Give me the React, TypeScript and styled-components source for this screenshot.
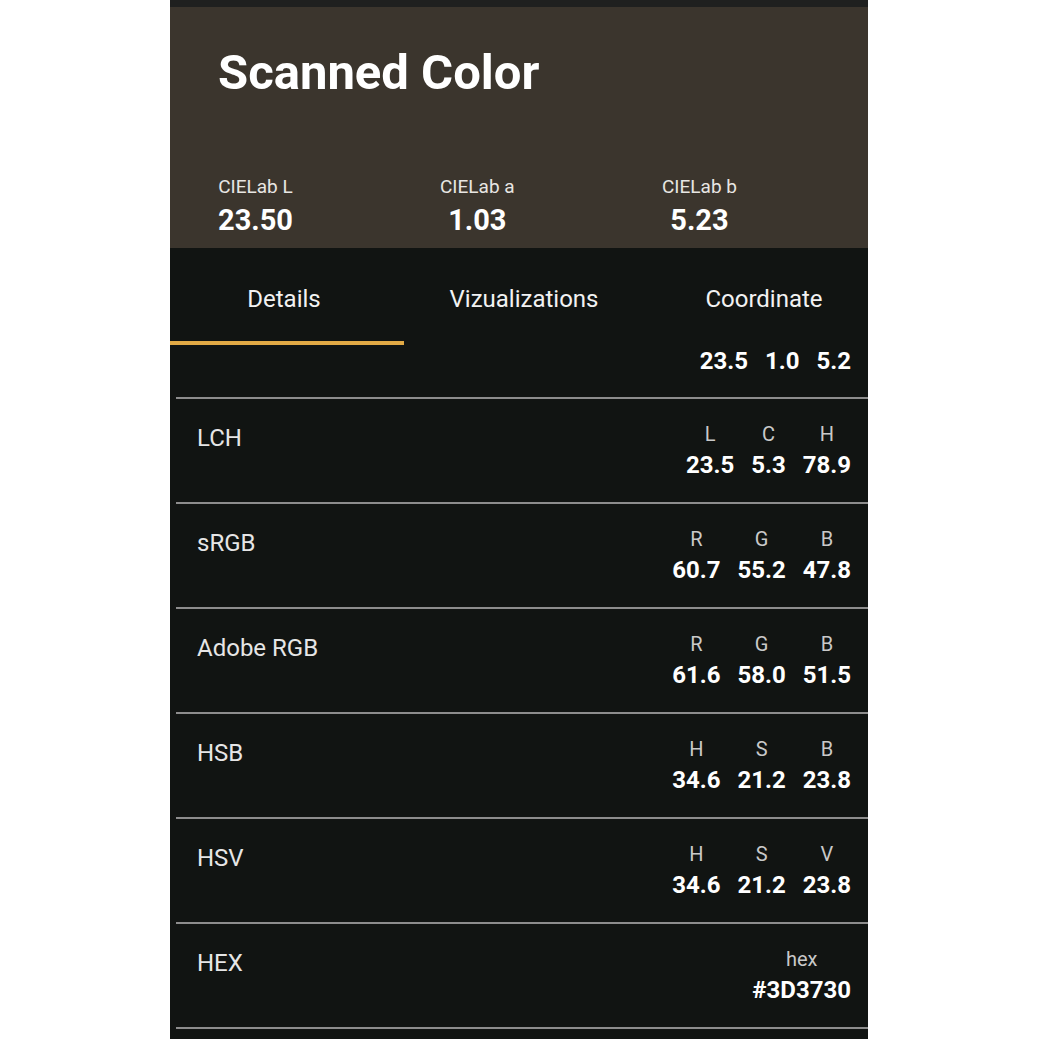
import React, { useState } from 'react';
import styled, { createGlobalStyle } from 'styled-components';

const GlobalStyle = createGlobalStyle`
  html, body {
    margin: 0;
    padding: 0;
    background: #ffffff;
  }
  body {
    font-family: Roboto, "Noto Sans", "Liberation Sans", sans-serif;
  }
`;

type Channel = { name: string; value: string };
type ColorSpace = { label: string; channels: Channel[]; scrolledPast?: boolean };

// the first row (CIELab) is scrolled up under the tab bar, only its values peek out
const spaces: ColorSpace[] = [
  {
    label: 'CIELab',
    scrolledPast: true,
    channels: [
      { name: 'L', value: '23.5' },
      { name: 'a', value: '1.0' },
      { name: 'b', value: '5.2' },
    ],
  },
  {
    label: 'LCH',
    channels: [
      { name: 'L', value: '23.5' },
      { name: 'C', value: '5.3' },
      { name: 'H', value: '78.9' },
    ],
  },
  {
    label: 'sRGB',
    channels: [
      { name: 'R', value: '60.7' },
      { name: 'G', value: '55.2' },
      { name: 'B', value: '47.8' },
    ],
  },
  {
    label: 'Adobe RGB',
    channels: [
      { name: 'R', value: '61.6' },
      { name: 'G', value: '58.0' },
      { name: 'B', value: '51.5' },
    ],
  },
  {
    label: 'HSB',
    channels: [
      { name: 'H', value: '34.6' },
      { name: 'S', value: '21.2' },
      { name: 'B', value: '23.8' },
    ],
  },
  {
    label: 'HSV',
    channels: [
      { name: 'H', value: '34.6' },
      { name: 'S', value: '21.2' },
      { name: 'V', value: '23.8' },
    ],
  },
  {
    label: 'HEX',
    channels: [{ name: 'hex', value: '#3D3730' }],
  },
];

const stats = [
  { name: 'CIELab L', value: '23.50' },
  { name: 'CIELab a', value: '1.03' },
  { name: 'CIELab b', value: '5.23' },
];

const tabs = ['Details', 'Vizualizations', 'Coordinate'];

export default function App() {
  const [activeTab, setActiveTab] = useState(0);

  return (
    <>
      <GlobalStyle />
      <Screen>
        <StatusStrip />
        <Header>
          <Title>Scanned Color</Title>
          <StatRow>
            {stats.map((stat) => (
              <Stat key={stat.name}>
                <StatName>{stat.name}</StatName>
                <StatValue>{stat.value}</StatValue>
              </Stat>
            ))}
          </StatRow>
        </Header>

        <TabBar>
          <TabTrack>
            {tabs.map((tab, i) => (
              <Tab key={tab} active={i === activeTab} onClick={() => setActiveTab(i)}>
                {tab}
              </Tab>
            ))}
          </TabTrack>
        </TabBar>

        <List>
          {spaces.map((space) => (
            <Row key={space.label} partial={!!space.scrolledPast}>
              {!space.scrolledPast && <RowLabel>{space.label}</RowLabel>}
              <Channels>
                {space.channels.map((ch) => (
                  <ChannelCol key={ch.name}>
                    {!space.scrolledPast && <ChannelName>{ch.name}</ChannelName>}
                    <ChannelValue>{ch.value}</ChannelValue>
                  </ChannelCol>
                ))}
              </Channels>
            </Row>
          ))}
        </List>
      </Screen>
    </>
  );
}

const Screen = styled.div`
  width: 698px;
  height: 1039px;
  margin-left: 170px;
  background: #111412;
  display: flex;
  flex-direction: column;
  overflow: hidden;
`;

const StatusStrip = styled.div`
  height: 7px;
  flex-shrink: 0;
  background: #1f201f;
`;

const Header = styled.div`
  flex-shrink: 0;
  height: 241px;
  box-sizing: border-box;
  padding: 37px 0 0 48px;
  background: #3b352d;
  display: flex;
  flex-direction: column;
`;

const Title = styled.h1`
  margin: 0;
  font-size: 49px;
  font-weight: 700;
  line-height: 1.172;
  color: #ffffff;
`;

const StatRow = styled.div`
  margin-top: 75px;
  display: grid;
  grid-template-columns: repeat(3, 222px);
  justify-items: start;
`;

const Stat = styled.div`
  display: flex;
  flex-direction: column;
  align-items: center;
  gap: 6px;
`;

const StatName = styled.span`
  font-size: 19px;
  line-height: 22px;
  color: #e8e6e3;
`;

const StatValue = styled.span`
  font-size: 29px;
  line-height: 33px;
  font-weight: 700;
  color: #ffffff;
`;

const TabBar = styled.div`
  flex-shrink: 0;
  height: 97px;
  overflow: hidden;
`;

const TabTrack = styled.div`
  display: flex;
  margin-left: -6px;
  height: 100%;
`;

const Tab = styled.div<{ active: boolean }>`
  flex: 0 0 240px;
  box-sizing: border-box;
  padding-top: 9px;
  display: flex;
  align-items: center;
  justify-content: center;
  font-size: 24px;
  color: #f2f2f2;
  border-bottom: 4px solid ${({ active }) => (active ? '#e2aa45' : 'transparent')};
  cursor: pointer;
`;

const List = styled.div`
  flex: 1;
  overflow: hidden;
`;

const Row = styled.div<{ partial: boolean }>`
  height: ${({ partial }) => (partial ? '50px' : '79px')};
  margin-left: 6px;
  padding: ${({ partial }) => (partial ? '2px' : '24px')} 17px 0 21px;
  border-bottom: 2px solid #8d8d8d;
  display: flex;
  justify-content: ${({ partial }) => (partial ? 'flex-end' : 'space-between')};
  align-items: flex-start;
`;

const RowLabel = styled.span`
  padding-top: 1px;
  font-size: 24px;
  line-height: 28px;
  color: #e6e6e6;
`;

const Channels = styled.div`
  display: flex;
  gap: 17px;
`;

const ChannelCol = styled.div`
  display: flex;
  flex-direction: column;
  align-items: center;
  gap: 5px;
`;

const ChannelName = styled.span`
  font-size: 20px;
  line-height: 23px;
  color: #c9c9c9;
`;

const ChannelValue = styled.span`
  font-size: 24px;
  line-height: 28px;
  font-weight: 700;
  color: #ffffff;
`;
